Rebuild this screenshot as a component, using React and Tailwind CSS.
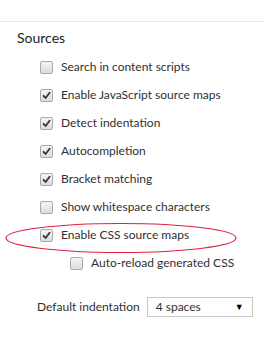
import React from 'react';

function Checkbox({ checked }) {
  return (
    <span className="relative flex h-[13px] w-[13px] shrink-0 items-center justify-center rounded-[2px] border border-[#a9a9a9] bg-gradient-to-b from-[#f4f4f4] to-[#dcdcdc]">
      {checked && (
        <svg width="9" height="9" viewBox="0 0 9 9">
          <path d="M1.5 4.8 L3.6 7 L7.6 1.8" fill="none" stroke="#333" strokeWidth="1.8" strokeLinecap="round" strokeLinejoin="round" />
        </svg>
      )}
    </span>
  );
}

function Row({ label, checked, indent }) {
  return (
    <div className={`flex h-[28px] items-center gap-[8px] ${indent ? 'pl-[70px]' : 'pl-[40px]'}`}>
      <Checkbox checked={checked} />
      <span className="whitespace-nowrap">{label}</span>
    </div>
  );
}

export default function App() {
  const rows = [
    { label: 'Search in content scripts', checked: false },
    { label: 'Enable JavaScript source maps', checked: true },
    { label: 'Detect indentation', checked: true },
    { label: 'Autocompletion', checked: true },
    { label: 'Bracket matching', checked: true },
    { label: 'Show whitespace characters', checked: false },
    { label: 'Enable CSS source maps', checked: true },
  ];

  return (
    <div className="relative h-[339px] w-[264px] overflow-hidden bg-white text-[12px] text-[#303030] [font-family:Lato,'Open_Sans',sans-serif]">
      <div className="h-[22px] border-b border-[#e8e8e8]" />
      <div className="flex h-[31px] items-center pl-[17px] text-[14px] text-[#222]">Sources</div>
      <div className="flex flex-col">
        {rows.map((r) => (
          <Row key={r.label} label={r.label} checked={r.checked} />
        ))}
        <Row label="Auto-reload generated CSS" checked={false} indent />
      </div>
      <div className="mt-[20px] flex items-center gap-[7px] whitespace-nowrap pl-[37px]">
        <span>Default indentation</span>
        <div className="flex h-[20px] w-[106px] items-center justify-between border border-[#c8c8c8] bg-white pl-[8px] pr-[8px]">
          <span>4 spaces</span>
          <span className="text-[9px] text-black">▼</span>
        </div>
      </div>

      {/* red annotation ellipse */}
      <svg className="pointer-events-none absolute left-0 top-0" width="264" height="339">
        <ellipse cx="121" cy="238" rx="115" ry="14.5" fill="none" stroke="#e0203c" strokeWidth="1.2" />
      </svg>
    </div>
  );
}
